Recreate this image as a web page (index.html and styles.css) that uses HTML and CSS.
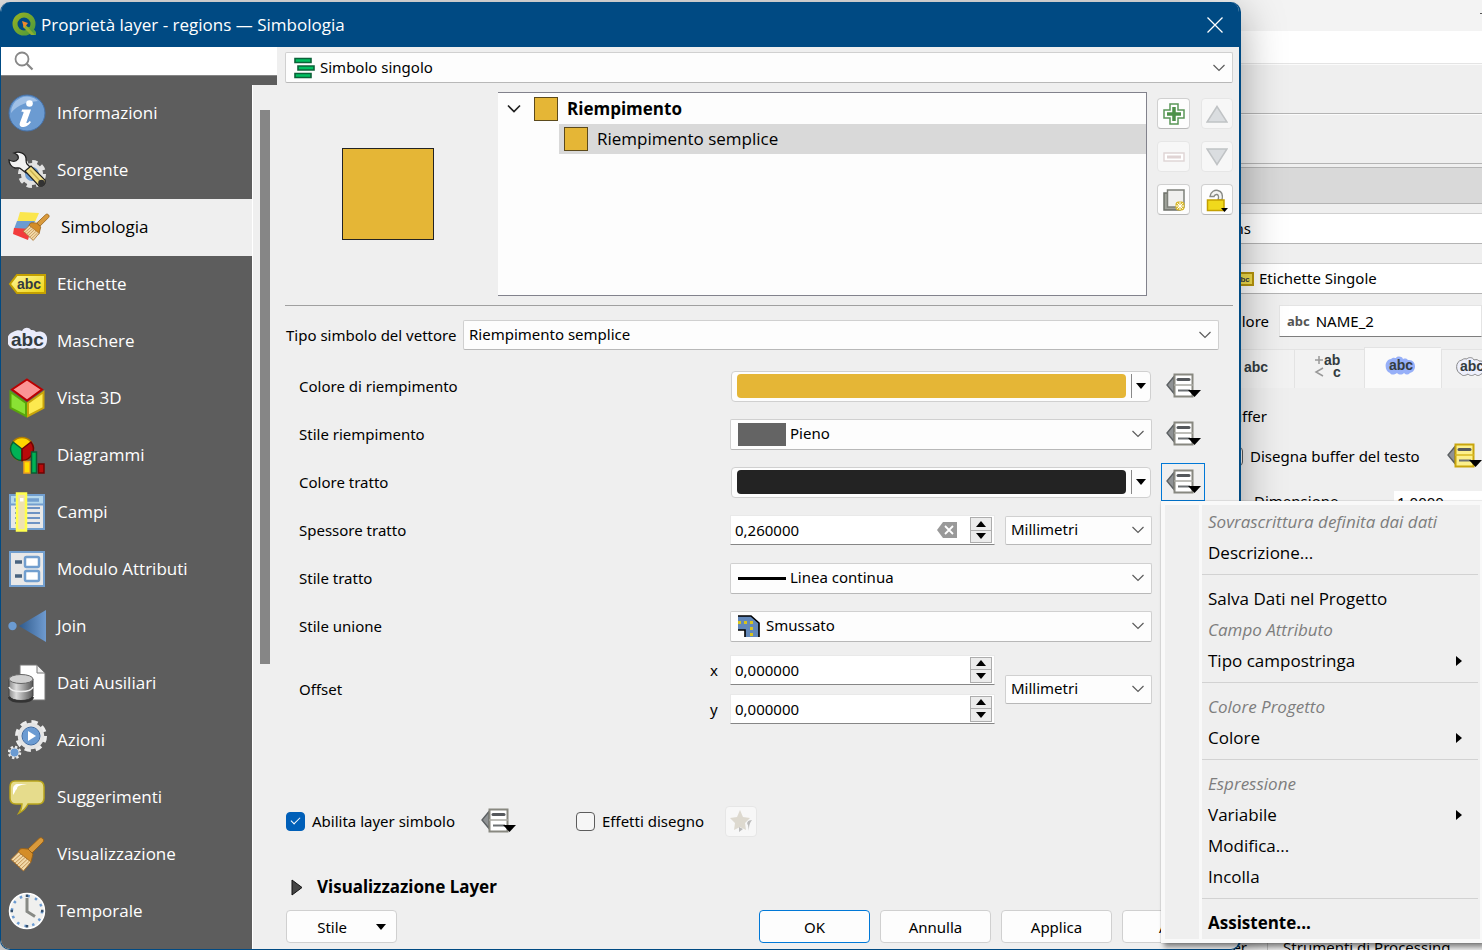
FILE: index.html
```html
<!DOCTYPE html>
<html lang="it">
<head>
<meta charset="UTF-8">
<meta name="viewport" content="width=device-width, initial-scale=1.0">
<title>Proprietà layer - regions — Simbologia</title>
<link rel="stylesheet" href="styles.css">
</head>
<body>

<!-- shared icons -->
<svg class="defs" aria-hidden="true">
    <defs>
        <linearGradient id="gJoin"><stop offset="0" stop-color="#2f5a8c"/><stop offset="1" stop-color="#6f9bd0"/></linearGradient>
        <linearGradient id="gLabel" x1="0" y1="0" x2="1" y2="1"><stop offset="0" stop-color="#fdf6a0"/><stop offset="1" stop-color="#efd50e"/></linearGradient>
        <linearGradient id="gDb"><stop offset="0" stop-color="#8a8a8a"/><stop offset="0.3" stop-color="#dcdcdc"/><stop offset="1" stop-color="#555"/></linearGradient>
        <linearGradient id="gQ" x1="0" y1="0" x2="1" y2="1"><stop offset="0" stop-color="#93b023"/><stop offset="1" stop-color="#4f9a3a"/></linearGradient>
    </defs>
    <symbol id="chevron" viewBox="0 0 14 10"><path d="M1.500 2 7 7.500 12.500 2" fill="none" stroke="#5c5c5c" stroke-width="1.200"/></symbol>
    <symbol id="down" viewBox="0 0 10 6"><path d="M0 0h10L5 6z"/></symbol>
    <symbol id="up" viewBox="0 0 10 6"><path d="M0 6h10L5 0z"/></symbol>
    <symbol id="override" viewBox="0 0 35 26">
        <path d="M8 3.500v17L1 12z" fill="#8f9294" stroke="#5b5f62" stroke-width="1.400"/>
        <path d="M8.500 1.500h18v22h-18z" fill="#fff" stroke="#888880" stroke-width="2"/>
        <path d="M8 12h19" stroke="#a8a8a2" stroke-width="1.500"/>
        <path d="M12 6.500h11" stroke="#55585c" stroke-width="3" stroke-linecap="round"/>
        <path d="M12 17.500h12" stroke="#6c7073" stroke-width="2"/>
        <path d="M22 17h13l-6.500 7z"/>
    </symbol>
    <symbol id="overrideOn" viewBox="0 0 35 26">
        <path d="M8 3.500v17L1 12z" fill="#8f9294" stroke="#5b5f62" stroke-width="1.400"/>
        <path d="M8.500 1.500h18v22h-18z" fill="#fcf08c" stroke="#c9a50c" stroke-width="2"/>
        <path d="M8 12h19" stroke="#d8b920" stroke-width="1.500"/>
        <path d="M12 6.500h11" stroke="#55585c" stroke-width="3" stroke-linecap="round"/>
        <path d="M12 17.500h12" stroke="#6c7073" stroke-width="2"/>
        <path d="M22 17h13l-6.500 7z"/>
    </symbol>
    <symbol id="brush" viewBox="0 0 38 38">
        <path d="M34 3c2 1 2 3 1 4L24 18l-4-4L31 3.500c1-1 2-1 3-.5z" fill="#d99a3c" stroke="#97621a"/>
        <path d="M12 14c3-1 5 0 8 0l5 5c-1 3-1 5-2 8l-2 2L10 17z" fill="#d48d28" stroke="#97621a"/>
        <path d="M10.500 17 3 24.500 15.500 36l7.500-9z" fill="#f2d9a8" stroke="#a8702a"/>
        <path d="m5 26 8-7M7 28l8-7M9 30l8-7.500M11 32l8-7.500M13 34l8-7.500" stroke="#c29355"/>
    </symbol>
</svg>

<!-- layer styling panel behind the dialog -->
<section class="panel-window">
    <div class="panel-title"><i class="minimize"></i></div>
    <div class="panel-menubar"></div>
    <div class="panel-toolbar"></div>
    <div class="panel-toolbar"></div>
    <div class="panel-header"></div>
    <div class="panel-combo layer"><select aria-label="Layer"><option>regions</option></select></div>
    <div class="panel-combo mode">
        <svg width="24" height="14" viewBox="0 0 24 14"><path d="M6 1h17v12H6L1 7z" fill="#f4df4e" stroke="#b8960e" stroke-width="2"/><text x="6" y="10" class="tiny">abc</text></svg>
        <select aria-label="Tipo etichette"><option>Etichette Singole</option></select>
    </div>
    <div class="panel-value">
        <label for="valore">Valore</label>
        <div class="value-box"><b>abc</b><input id="valore" type="text" value="NAME_2"></div>
    </div>
    <div class="panel-tabs">
        <button type="button" class="first" aria-label="Formattazione"><b>abc</b></button>
        <button type="button" aria-label="Testo">
            <svg width="28" height="26" viewBox="0 0 28 26"><path d="M1 6h8M5 2v8M9 14l-7 4 7 4" fill="none" stroke="#999" stroke-width="1.500"/><text x="10" y="11" class="glyph">ab</text><text x="19" y="23" class="glyph">c</text></svg>
        </button>
        <button type="button" class="selected" aria-label="Buffer">
            <svg width="32" height="20" viewBox="0 0 32 20"><path d="M6 3c2-2 4-1 5-1 1-2 6-2 7 1 3-1 4 0 5 1 9-1 9 12 2 13-2 2-4 2-6 0-2 2-5 2-7 0-3 2-6 2-7 0C-1 15-1 4 6 3z" fill="#96aff8"/><text x="4" y="14" class="glyph">abc</text></svg>
        </button>
        <button type="button" class="last" aria-label="Maschera">
            <svg width="32" height="20" viewBox="0 0 32 20"><path d="M6 3c2-2 4-1 5-1 1-2 6-2 7 1 3-1 4 0 5 1 9-1 9 12 2 13-2 2-4 2-6 0-2 2-5 2-7 0-3 2-6 2-7 0C-1 15-1 4 6 3z" fill="#eef0fc" stroke="#888"/><text x="4" y="14" class="glyph">abc</text></svg>
        </button>
    </div>
    <div class="panel-group">Buffer</div>
    <div class="panel-check">
        <input type="checkbox" id="buffer"><label for="buffer">Disegna buffer del testo</label>
        <svg width="35" height="26"><use href="#overrideOn"/></svg>
    </div>
    <div class="panel-size"><label for="dimensione">Dimensione</label><input id="dimensione" type="text" value="1,0000"></div>
    <div class="panel-docks"><span>Ricer</span><span class="dock">Strumenti di Processing</span></div>
</section>

<main class="dialog">
    <header class="titlebar">
        <svg width="25" height="25" viewBox="0 0 25 25">
            <path d="M15 15h5l4 5v3h-4z" fill="#5aa03c"/>
            <circle cx="12" cy="12" r="9" fill="none" stroke="url(#gQ)" stroke-width="5"/>
            <path d="m12 11 11 12h-4L11 15z" fill="#8cae30"/>
            <path d="m10 9 6 2-4 5z" fill="#f08a2c"/>
        </svg>
        <h1>Proprietà layer - regions — Simbologia</h1>
        <button type="button" class="close" aria-label="Chiudi"><svg width="16" height="16" viewBox="0 0 16 16"><path d="m.5.5 15 15m0-15-15 15" stroke="#fff" stroke-width="1.300"/></svg></button>
    </header>

    <div class="content">
        <aside class="sidebar">
            <div class="search">
                <svg width="20" height="20" viewBox="0 0 20 20"><circle cx="8" cy="8" r="6.500" fill="none" stroke="#878787" stroke-width="1.800"/><path d="m12.500 12.500 6 6" stroke="#878787" stroke-width="2.200"/></svg>
                <input type="search" aria-label="Cerca">
            </div>
            <div class="list">
                <nav class="pages">
                    <a href="#informazioni">
                        <svg width="38" height="38" viewBox="0 0 38 38"><circle cx="19" cy="19" r="18" fill="#6b9bd2" stroke="#4571a8"/><path d="M3 19A16 16 0 0 1 30 7C20 8 10 10 3 19z" fill="#a0c0e6"/><circle cx="21.500" cy="9.500" r="3.300" fill="#fff"/><path d="M14 15.500h9l-4.500 12.500c-.5 1.600 1.500 1.500 3-1l1.500 1c-2.500 4-6 5-8 5-3 0-4-2-3-4.500L15.500 19c.5-1.500-1-1.500-2-1z" fill="#fff"/></svg>
                        Informazioni</a>
                    <a href="#sorgente">
                        <svg width="38" height="38" viewBox="0 0 38 38"><circle cx="24" cy="23" r="11.500" fill="none" stroke="#e2e2e2" stroke-width="5" stroke-dasharray="5 4"/><circle cx="24" cy="23" r="9" fill="#6b9bd2" stroke="#e2e2e2" stroke-width="4"/><path d="M1 9c4 2 7 2 9-1 1-3-1-5-4-6 5-2 11 0 12 5 0 3 0 5 1 6l4 4-5 5-5-4c-2-2-3-1-6-1-4-1-6-5-6-8z" fill="#f2f2f2" stroke="#222" stroke-width="1.300"/><path d="m17 20 6-5 14 14c1 4-2 7-6 6z" fill="#f0dc82" stroke="#222" stroke-width="1.200"/><path d="m22 19 11 12" stroke="#c9b250" stroke-width="1.500"/><circle cx="33.500" cy="32" r="3.300" fill="#333"/></svg>
                        Sorgente</a>
                    <a href="#simbologia" class="current">
                        <svg width="42" height="38" viewBox="0 0 42 38"><path d="m10 4 19 1-4 9H7z" fill="#fbe64d"/><path d="M7 13h18l-4 8H4z" fill="#6b9bd2"/><path d="m4 20 17 1-3 11-15-6z" fill="#f23c3c"/><use href="#brush" x="11" y="2" width="30" height="34"/></svg>
                        Simbologia</a>
                    <a href="#etichette">
                        <svg width="38" height="38" viewBox="0 0 38 38"><path d="M9 10h28v18H9l-7-9z" fill="url(#gLabel)" stroke="#c4a000" stroke-width="2"/><text x="9" y="24" class="abc">abc</text></svg>
                        Etichette</a>
                    <a href="#maschere">
                        <svg width="42" height="38" viewBox="1 -1 42 38"><path d="M6 9c3-2 7-2 9-1 2-4 7-4 9-1 4 0 4 1 5 2 5-2 12 1 11 8 0 9-8 10-12 8-3 1-6 1-8 0-3 1-5 1-7 0-3 1-6 1-8 0C-2 22-1 11 6 9z" fill="#eaecfb"/><text x="4" y="23" class="abc big">abc</text></svg>
                        Maschere</a>
                    <a href="#vista3d">
                        <svg width="38" height="40" viewBox="0 0 38 40"><path d="m19 1.500 15 10-15 11-15-11z" fill="#fc9494" stroke="#b00" stroke-width="2"/><path d="M2.500 14 18 25v13L2.500 30z" fill="#8ae234" stroke="#5aa60a" stroke-width="2"/><path d="M35.500 14 20 25v13l15.500-8z" fill="#fce94f" stroke="#c9a50a" stroke-width="2"/></svg>
                        Vista 3D</a>
                    <a href="#diagrammi">
                        <svg width="38" height="38" viewBox="0 0 38 38"><circle cx="14" cy="13" r="11.500" fill="#ffd500" stroke="#b07c00" stroke-width="1.500"/><path d="M14 13v11.500A11.500 11.500 0 0 1 5 6z" fill="#00b355" stroke="#0a5c34" stroke-width="1.500"/><path d="M14 13v11.500A11.500 11.500 0 0 0 23 6z" fill="#b80a0a" stroke="#6e0404" stroke-width="1.500"/><path d="M16 25.500h6V37h-6z" fill="#fd0" stroke="#f0a020" stroke-width="1.500"/><path d="M23.500 16h5v21h-5z" fill="#00b355" stroke="#0a5c34" stroke-width="1.500"/><path d="M30.500 28h5.500v9h-5.500z" fill="#b80a0a" stroke="#6e0404" stroke-width="1.500"/></svg>
                        Diagrammi</a>
                    <a href="#campi">
                        <svg width="38" height="40" viewBox="0 0 38 40"><path d="M2 3h34v34H2z" fill="#e8e8e8" stroke="#729fcf" stroke-width="2"/><path d="M3 4h32v8H3z" fill="#b5d8ec"/><path d="M3 12.500h32" stroke="#729fcf" stroke-width="2"/><path d="M6 8h25" stroke="#729fcf" stroke-width="3.500"/><path d="M7 16h25M7 21h25M7 26h25M7 31h25" stroke="#6d93c4" stroke-width="2"/><path d="M9 1.500h9v37H9z" fill="#efe2b0" stroke="#ffff4d" stroke-width="2.500"/><path d="M12 6h3.500v3.500H12z" fill="#fff"/></svg>
                        Campi</a>
                    <a href="#modulo">
                        <svg width="38" height="38" viewBox="0 0 38 38"><path d="M2 2h34v34H2z" fill="#e8e8e8" stroke="#729fcf" stroke-width="2"/><rect x="17" y="7" width="14" height="10" rx="1.500" fill="#fff" stroke="#729fcf" stroke-width="2.500"/><rect x="17" y="21" width="14" height="10" rx="1.500" fill="#fff" stroke="#729fcf" stroke-width="2.500"/><path d="M7 12h7M7 26h7" stroke="#4a6480" stroke-width="3.500"/></svg>
                        Modulo Attributi</a>
                    <a href="#join">
                        <svg width="38" height="38" viewBox="0 0 38 38"><circle cx="4.500" cy="19" r="4.200" fill="#6b9bd2"/><path d="M11 19 38 3v32z" fill="url(#gJoin)"/></svg>
                        Join</a>
                    <a href="#ausiliari">
                        <svg width="40" height="40" viewBox="0 0 40 40"><path d="M12 2h17l8 8v27H12z" fill="#fff" stroke="#777"/><path d="M29 2v8h8z" fill="#eee" stroke="#777"/><path d="M1 16v17c2 6 22 6 24 0V16z" fill="url(#gDb)" stroke="#444"/><ellipse cx="13" cy="16" rx="12" ry="4.500" fill="#d0d0d0" stroke="#666"/><path d="M1 24c2 6 22 6 24 0" fill="none" stroke="#eee" stroke-width="1.500"/><path d="M1 34c2 6 22 6 24 0" fill="none" stroke="#333" stroke-width="2.500"/></svg>
                        Dati Ausiliari</a>
                    <a href="#azioni">
                        <svg width="40" height="42" viewBox="0 0 40 42"><circle cx="23" cy="17" r="14" fill="none" stroke="#ececec" stroke-width="4" stroke-dasharray="6.200 4.800"/><circle cx="23" cy="17" r="11" fill="#6b9bd2" stroke="#e4e4e4" stroke-width="4.500"/><circle cx="23" cy="17" r="9" fill="none" stroke="#3d6aa3"/><path d="m20 12 8 5-8 5z" fill="#fff"/><circle cx="6.500" cy="33.500" r="5.500" fill="none" stroke="#ececec" stroke-width="2.500" stroke-dasharray="2.300 2"/><circle cx="6.500" cy="33.500" r="4.500" fill="#6b9bd2" stroke="#e4e4e4"/></svg>
                        Azioni</a>
                    <a href="#suggerimenti">
                        <svg width="38" height="38" viewBox="0 0 38 38"><path d="M7 3h23c4 0 6 2 6 6v11c0 4-2 6-6 6H20c-2 4-5 7-9 9 2-3 3-6 3-9H8c-4 0-6-2-6-6V9c0-4 2-6 5-6z" fill="#e6dc8c" stroke="#b9a51c" stroke-width="1.500"/><path d="M5 17V11c0-3 2-5 5-5h9c-7 1-10 2-10 5-2 1-2 4-4 6z" fill="#fff"/></svg>
                        Suggerimenti</a>
                    <a href="#visualizzazione">
                        <svg width="38" height="38"><use href="#brush"/></svg>
                        Visualizzazione</a>
                    <a href="#temporale">
                        <svg width="38" height="38" viewBox="0 0 38 38"><circle cx="19" cy="19" r="17.500" fill="#f0f0ee" stroke="#fff" stroke-width="1.500"/><circle cx="19" cy="19" r="15" fill="none" stroke="#6b9bd2" stroke-width="2.500" stroke-dasharray="2.500 5.354"/><path d="M19 2.500V5M19 33v2.500M2.500 19H5M33 19h2.500" stroke="#34506e" stroke-width="2.500"/><path d="M19 6v13.500l8 5" fill="none" stroke="#888a85" stroke-width="3"/></svg>
                        Temporale</a>
                </nav>
                <div class="scrollbar"><div class="thumb"></div></div>
            </div>
        </aside>

        <form class="main">
            <div class="combo renderer">
                <svg width="21" height="22" viewBox="0 0 21 22"><path d="M1 1.500h16v4H1zM4 9h16v4H4zM1 16.500h16v4H1z" fill="#00c060" stroke="#0b6138" stroke-width="1.600"/></svg>
                <select aria-label="Tipo di simbolo"><option>Simbolo singolo</option></select>
                <svg class="chev"><use href="#chevron"/></svg>
            </div>

            <div class="symbol">
                <div class="preview"><i></i></div>
                <ul class="tree">
                    <li class="root"><svg width="14" height="10" viewBox="0 0 14 10"><path d="m1 1.500 6 6 6-6" fill="none" stroke="#222" stroke-width="1.700"/></svg><i></i>Riempimento</li>
                    <li class="leaf"><i></i>Riempimento semplice</li>
                </ul>
                <div class="tools">
                    <button type="button" aria-label="Aggiungi"><svg width="22" height="22" viewBox="0 0 22 22"><path d="M7 1h8v6h6v8h-6v6H7v-6H1V7h6z" fill="#fff" stroke="#5a9657" stroke-width="1.500"/><path d="M11 4v14M4 11h14" stroke="#4d9149" stroke-width="3.500"/></svg></button>
                    <button type="button" disabled aria-label="Sposta su"><svg width="22" height="18" viewBox="0 0 22 18"><path d="M11 1.500 21 17H1z" fill="#dadde0" stroke="#c0c3c5" stroke-width="1.500"/></svg></button>
                    <button type="button" disabled aria-label="Rimuovi"><svg width="22" height="10" viewBox="0 0 22 10"><path d="M1 1h20v8H1z" fill="#fff" stroke="#e0d6d6" stroke-width="1.500"/><path d="M4 5h14" stroke="#e0d4d4" stroke-width="3"/></svg></button>
                    <button type="button" disabled aria-label="Sposta giù"><svg width="22" height="18" viewBox="0 0 22 18"><path d="M11 16.500 21 1H1z" fill="#dadde0" stroke="#c0c3c5" stroke-width="1.500"/></svg></button>
                    <button type="button" aria-label="Duplica"><svg width="22" height="22" viewBox="0 0 22 22"><path d="M1 4h16v17H1z" fill="#a0a39b" stroke="#6d7069" stroke-width="1.500"/><path d="M4.500 1H21v17H4.500z" fill="#f0f0ee" stroke="#7d8079" stroke-width="1.500"/><rect x="12.500" y="12.500" width="9" height="9" rx="3" fill="#d9b92c"/><path d="M17 13v8M13 17h8M14.200 14.200l5.600 5.600m0-5.600-5.600 5.600" stroke="#fff"/></svg></button>
                    <button type="button" aria-label="Blocca"><svg width="24" height="24" viewBox="0 0 24 24"><path d="M5 8.500C5.500 3.500 10 1.500 13 2.500c4 1 5 5 4 9.500h-4c1-3 .5-5-1-5.500-1.500-.3-2.500.5-3 2z" fill="#f4f4f2" stroke="#888a85" stroke-width="1.400"/><path d="M2.500 12H19v10.500H2.500z" fill="#f0d91c" stroke="#c4a000" stroke-width="1.500"/><path d="M16 20h7l-3.500 4z"/></svg></button>
                </div>
            </div>

            <div class="symbol-type">
                <label for="tipo">Tipo simbolo del vettore</label>
                <div class="combo">
                    <select id="tipo"><option>Riempimento semplice</option></select>
                    <svg class="chev"><use href="#chevron"/></svg>
                </div>
            </div>

            <div class="props">
                <div class="prop">
                    <label for="colore">Colore di riempimento</label>
                    <button type="button" id="colore" class="color"><i class="fill"></i><svg width="10" height="6"><use href="#down"/></svg></button>
                    <button type="button" class="override" aria-label="Sovrascrittura riempimento"><svg width="35" height="26"><use href="#override"/></svg></button>
                </div>
                <div class="prop">
                    <label for="stileRiempimento">Stile riempimento</label>
                    <div class="combo">
                        <i class="solid"></i>
                        <select id="stileRiempimento"><option>Pieno</option></select>
                        <svg class="chev"><use href="#chevron"/></svg>
                    </div>
                    <button type="button" class="override" aria-label="Sovrascrittura stile"><svg width="35" height="26"><use href="#override"/></svg></button>
                </div>
                <div class="prop">
                    <label for="coloreTratto">Colore tratto</label>
                    <button type="button" id="coloreTratto" class="color"><i class="stroke"></i><svg width="10" height="6"><use href="#down"/></svg></button>
                    <button type="button" class="override active" aria-label="Sovrascrittura tratto"><svg width="35" height="26"><use href="#override"/></svg></button>
                </div>
                <div class="prop">
                    <label for="spessore">Spessore tratto</label>
                    <div class="pair">
                        <div class="spin">
                            <input id="spessore" type="text" value="0,260000">
                            <svg class="clear" width="20" height="16" viewBox="0 0 20 16"><path d="M6 0h14v16H6L0 8z" fill="#999"/><path d="m8 4 8 8m0-8-8 8" stroke="#fff" stroke-width="1.800"/></svg>
                            <span class="steps"><button type="button" aria-label="Aumenta"><svg width="10" height="6"><use href="#up"/></svg></button><button type="button" aria-label="Diminuisci"><svg width="10" height="6"><use href="#down"/></svg></button></span>
                        </div>
                        <div class="combo unit"><select aria-label="Unità spessore"><option>Millimetri</option></select><svg class="chev"><use href="#chevron"/></svg></div>
                    </div>
                </div>
                <div class="prop">
                    <label for="stileTratto">Stile tratto</label>
                    <div class="combo">
                        <i class="line"></i>
                        <select id="stileTratto"><option>Linea continua</option></select>
                        <svg class="chev"><use href="#chevron"/></svg>
                    </div>
                </div>
                <div class="prop">
                    <label for="unione">Stile unione</label>
                    <div class="combo join">
                        <svg width="22" height="22" viewBox="0 0 22 22"><path d="M0 1h13l8 7v14H7v-7H0z" fill="#6288ba"/><path d="M0 1h13l8 7v14M0 15h7v7" fill="none" stroke="#000" stroke-width="1.600"/><path d="M0 6h3v3H0zM6 6h3v3H6zM12 6h3v3h-3zM12 12h3v3h-3zM12 18h3v3h-3z" fill="#d8c41e"/></svg>
                        <select id="unione"><option>Smussato</option></select>
                        <svg class="chev"><use href="#chevron"/></svg>
                    </div>
                </div>
                <div class="prop offset">
                    <span>Offset</span>
                    <div class="pair">
                        <div class="xy">
                            <div class="axis">
                                <label for="ox">x</label>
                                <div class="spin"><input id="ox" type="text" value="0,000000"><span class="steps"><button type="button" aria-label="Aumenta x"><svg width="10" height="6"><use href="#up"/></svg></button><button type="button" aria-label="Diminuisci x"><svg width="10" height="6"><use href="#down"/></svg></button></span></div>
                            </div>
                            <div class="axis">
                                <label for="oy">y</label>
                                <div class="spin"><input id="oy" type="text" value="0,000000"><span class="steps"><button type="button" aria-label="Aumenta y"><svg width="10" height="6"><use href="#up"/></svg></button><button type="button" aria-label="Diminuisci y"><svg width="10" height="6"><use href="#down"/></svg></button></span></div>
                            </div>
                        </div>
                        <div class="combo unit"><select aria-label="Unità offset"><option>Millimetri</option></select><svg class="chev"><use href="#chevron"/></svg></div>
                    </div>
                </div>
            </div>

            <div class="options">
                <input type="checkbox" id="abilita" checked><label for="abilita">Abilita layer simbolo</label>
                <button type="button" class="override" aria-label="Sovrascrittura layer"><svg width="35" height="26"><use href="#override"/></svg></button>
                <input type="checkbox" id="effetti" class="effects"><label for="effetti">Effetti disegno</label>
                <button type="button" class="star" disabled aria-label="Personalizza effetti"><svg width="24" height="24" viewBox="0 0 24 24"><path d="m11 1 3 7 7 1-5 5 1 7-6-3-6 3 1-7-5-5 7-1z" fill="#ddd9cf"/><path d="M23 11c-4 0-6 3-4 5l1 6c0-4 0-7 3-11zM10 18l4 2-4 3z" fill="#bbb"/></svg></button>
            </div>

            <details class="rendering">
                <summary><svg width="12" height="17" viewBox="0 0 12 17"><path d="M1 1v15l10-7.500z" fill="#444" stroke="#111"/></svg>Visualizzazione Layer</summary>
            </details>

            <footer class="buttons">
                <button type="button" class="style">Stile<svg width="10" height="6"><use href="#down"/></svg></button>
                <button type="submit" class="default">OK</button>
                <button type="button">Annulla</button>
                <button type="button">Applica</button>
                <button type="button">Aiuto</button>
            </footer>
        </form>
    </div>
</main>

<!-- data defined override menu -->
<div class="menu" role="menu">
    <button type="button" role="menuitem" disabled>Sovrascrittura definita dai dati</button>
    <button type="button" role="menuitem">Descrizione...</button>
    <hr>
    <button type="button" role="menuitem">Salva Dati nel Progetto</button>
    <button type="button" role="menuitem" disabled>Campo Attributo</button>
    <button type="button" role="menuitem">Tipo campostringa<svg width="6" height="10" viewBox="0 0 6 10"><path d="M0 0v10l6-5z"/></svg></button>
    <hr>
    <button type="button" role="menuitem" disabled>Colore Progetto</button>
    <button type="button" role="menuitem">Colore<svg width="6" height="10" viewBox="0 0 6 10"><path d="M0 0v10l6-5z"/></svg></button>
    <hr>
    <button type="button" role="menuitem" disabled>Espressione</button>
    <button type="button" role="menuitem">Variabile<svg width="6" height="10" viewBox="0 0 6 10"><path d="M0 0v10l6-5z"/></svg></button>
    <button type="button" role="menuitem">Modifica...</button>
    <button type="button" role="menuitem">Incolla</button>
    <hr>
    <button type="button" role="menuitem" class="strong">Assistente...</button>
</div>

</body>
</html>
```
FILE: styles.css
```css
* {
    box-sizing: border-box;
}
body {
    margin: 0;
    height: 100vh;
    overflow: hidden;
    position: relative;
    background: #e3e3e3;
    color: #000;
    font-family: "Noto Sans", "Open Sans", sans-serif;
    font-size: 15px;
    line-height: 20px;
}
button, input, select {
    font: inherit;
    color: inherit;
    margin: 0;
}
button {
    padding: 0;
}
select {
    appearance: none;
    border: 0;
    padding: 0 0 2px;
    background: transparent;
    flex: 1;
    min-width: 0;
    height: 100%;
    outline: 0;
}
svg {
    display: block;
    flex: none;
}
.defs {
    position: absolute;
    width: 0;
    height: 0;
}
.abc, .glyph, .tiny {
    font-family: "Liberation Sans", Arial, sans-serif;
    font-weight: bold;
    font-size: 14px;
    fill: #333b40;
}
.abc.big {
    font-size: 19px;
}
.tiny {
    font-size: 8px;
}
input[type="checkbox"] {
    appearance: none;
    width: 19px;
    height: 19px;
    border: 1px solid #5c5c5c;
    border-radius: 4px;
    background: #f6f6f6;
    flex: none;
}
input[type="checkbox"]:checked {
    background: #005fb8;
    border-color: #005fb8;
    display: grid;
    place-items: center;
}
input[type="checkbox"]:checked::after {
    content: "";
    width: 8px;
    height: 4px;
    margin-bottom: 3px;
    border-left: 1px solid #fff;
    border-bottom: 1px solid #fff;
    transform: rotate(-45deg);
}

/* window behind */
.panel-window {
    position: absolute;
    top: 0;
    right: 0;
    bottom: 0;
    width: 302px;
    background: #efefef;
    overflow: hidden;
    display: flex;
    flex-direction: column;
}
.panel-window > div {
    flex: none;
}
.panel-title {
    height: 31px;
    background: #f3f3f3;
    display: flex;
    justify-content: flex-end;
    align-items: center;
}
.minimize {
    width: 2px;
    height: 1px;
    margin-bottom: 4px;
    background: #555;
}
.panel-menubar {
    height: 33px;
    background: #fff;
    border-bottom: 1px solid #e4e4e4;
}
.panel-toolbar {
    height: 50px;
    border-top: 1px solid #fbfbfb;
    border-bottom: 1px solid #b4b4b4;
}
.panel-header {
    height: 37px;
    margin-top: 3px;
    background: #d9d9d9;
    border-top: 1px solid #b4b4b4;
    border-bottom: 1px solid #b4b4b4;
}
.panel-combo {
    height: 31px;
    background: #fff;
    border-top: 1px solid #d0d0d0;
    border-bottom: 1px solid #b4b4b4;
    display: flex;
    align-items: center;
}
.layer {
    margin-top: 9px;
    padding-left: 18px;
}
.mode {
    margin-top: 19px;
    padding-left: 50px;
    gap: 5px;
}
.panel-value {
    display: flex;
    align-items: center;
    gap: 10px;
    padding-left: 44px;
    height: 32px;
    margin-top: 11px;
}
.panel-value label {
    width: 45px;
    direction: rtl;
}
.value-box {
    flex: 1;
    height: 32px;
    display: flex;
    align-items: center;
    gap: 6px;
    padding-left: 7px;
    background: #fff;
    border: 1px solid #e4e4e4;
    border-bottom-color: #7e7e7e;
}
.value-box b {
    font-size: 13px;
    color: #555;
}
.value-box input {
    width: 100px;
    border: 0;
    padding: 0;
}
.panel-tabs {
    display: flex;
    align-items: flex-end;
    height: 41px;
    margin-top: 10px;
}
.panel-tabs button {
    width: 70px;
    height: 39px;
    padding: 0 4px 4px 0;
    border: 1px solid #e3e3e3;
    border-bottom: 0;
    border-right: 0;
    background: #f2f2f2;
    display: flex;
    align-items: center;
    justify-content: center;
    flex: none;
}
.panel-tabs .first {
    width: 114px;
    justify-content: flex-end;
    padding-right: 26px;
    font-family: "Liberation Sans", Arial, sans-serif;
    font-size: 14px;
    color: #333b40;
}
.panel-tabs .selected {
    width: 77px;
    height: 41px;
    background: #fafafa;
}
.panel-tabs .last {
    width: 80px;
    justify-content: flex-start;
    padding-left: 14px;
}
.panel-group {
    margin-top: 18px;
    padding-left: 43px;
}
.panel-check {
    display: flex;
    align-items: center;
    height: 26px;
    margin-top: 17px;
    padding-left: 44px;
}
.panel-check label {
    margin-left: 7px;
    flex: 1;
}
.panel-size {
    display: flex;
    justify-content: space-between;
    align-items: flex-start;
    margin-top: 22px;
    padding-left: 74px;
}
.panel-size input {
    width: 88px;
    height: 30px;
    border: 0;
    padding: 0 3px 8px;
    background: #fff;
}
.panel-docks {
    display: flex;
    align-items: flex-start;
    margin-top: auto;
    height: 13px;
    padding-left: 32px;
    gap: 20px;
}
.dock {
    flex: 1;
    padding-left: 15px;
    border-left: 1px solid #c4c4c4;
    white-space: nowrap;
}

/* dialog */
.dialog {
    position: absolute;
    top: 2px;
    left: 0;
    right: 241px;
    bottom: 0;
    display: flex;
    flex-direction: column;
    background: #efefef;
    border: 1px solid #004a83;
    border-top: 0;
    border-right-width: 2px;
    border-radius: 10px;
    overflow: hidden;
    box-shadow: 0 10px 44px rgba(0, 0, 0, 0.35);
}
.titlebar {
    height: 45px;
    flex: none;
    display: flex;
    align-items: center;
    gap: 4px;
    padding: 0 16px 0 11px;
    background: #004a83;
    color: #fff;
}
.titlebar h1 {
    flex: 1;
    margin: 0;
    font-family: "Open Sans", "Noto Sans", sans-serif;
    font-size: 17px;
    font-weight: normal;
}
.close {
    border: 0;
    background: none;
}
.content {
    flex: 1;
    min-height: 0;
    display: flex;
}

/* page list */
.sidebar {
    width: 276px;
    flex: none;
    display: flex;
    flex-direction: column;
    background: #5d5d5d;
}
.search {
    height: 29px;
    display: flex;
    align-items: center;
    gap: 8px;
    padding-left: 13px;
    background: #fff;
    border-bottom: 1px solid #868686;
}
.search input {
    flex: 1;
    min-width: 0;
    border: 0;
    outline: 0;
    background: transparent;
}
.list {
    flex: 1;
    margin-top: 9px;
    display: flex;
}
.pages {
    flex: 1;
    font-family: "Open Sans", "Noto Sans", sans-serif;
    font-size: 17px;
}
.pages a {
    display: grid;
    grid-template-columns: 39px 1fr;
    align-items: center;
    height: 57px;
    padding: 0 0 2px 7px;
    gap: 10px;
    color: #fff;
    text-decoration: none;
}
.pages .current {
    grid-template-columns: 41px 1fr;
    background: #efefef;
    color: #000;
    padding-left: 9px;
}
.scrollbar {
    width: 25px;
    padding: 25px 7px 0;
    background: #efefef;
    border-left: 1px solid #fff;
}
.thumb {
    width: 10px;
    height: 554px;
    background: #868686;
}

/* symbology page */
.main {
    flex: 1;
    min-width: 0;
    display: flex;
    flex-direction: column;
    padding: 5px 6px 6px 8px;
}
.combo {
    flex: 1;
    min-width: 0;
    height: 31px;
    display: flex;
    align-items: center;
    padding: 0 6px 0 5px;
    background: #fdfdfd;
    border: 1px solid #d0d0d0;
    border-bottom-color: #b8b8b8;
    border-radius: 2px;
}
.chev {
    width: 14px;
    height: 10px;
    pointer-events: none;
}
.renderer {
    flex: none;
    padding-left: 8px;
    gap: 5px;
}
.symbol {
    display: flex;
    margin-top: 9px;
    padding-bottom: 9px;
    border-bottom: 1px solid #a0a0a0;
}
.preview {
    width: 205px;
    margin-right: 8px;
    display: flex;
    align-items: center;
    justify-content: center;
}
.preview i {
    width: 92px;
    height: 92px;
    background: #e5b636;
    border: 1px solid #232323;
}
.tree {
    flex: 1;
    height: 204px;
    margin: 0;
    padding: 1px 0;
    list-style: none;
    background: #fdfdfd;
    border: 1px solid #82828c;
    border-left: 0;
    font-family: "Open Sans", "Noto Sans", sans-serif;
    font-size: 17px;
}
.tree li {
    height: 30px;
    display: flex;
    align-items: center;
}
.tree i {
    width: 24px;
    height: 24px;
    margin-right: 9px;
    background: #e5b636;
    border: 1px solid #5c4a1c;
}
.tree .root {
    padding-left: 9px;
    font-weight: bold;
}
.tree .root i {
    margin-left: 13px;
}
.tree .leaf {
    margin-left: 61px;
    padding-left: 5px;
    background: #d9d9d9;
}
.tools {
    display: grid;
    grid-template-columns: 33px 32px;
    grid-auto-rows: 31px;
    gap: 12px 11px;
    padding-top: 6px;
    margin-left: 10px;
}
.tools button, .star {
    display: flex;
    align-items: center;
    justify-content: center;
    background: #fdfdfd;
    border: 1px solid #d0d0d0;
    border-bottom-color: #b8b8b8;
    border-radius: 4px;
}
.tools button:disabled, .star:disabled {
    background: #f7f7f7;
    border-color: #e6e6e6;
}
.symbol-type {
    display: flex;
    align-items: center;
    margin: 14px 14px 0 1px;
}
.symbol-type label {
    width: 177px;
    white-space: nowrap;
}
.symbol-type .combo {
    height: 30px;
}
.props {
    margin-top: 12px;
    padding-left: 14px;
}
.prop {
    display: grid;
    grid-template-columns: 1fr 422px 47px;
    column-gap: 9px;
    align-items: center;
    height: 48px;
    padding-right: 25px;
}
.color {
    height: 31px;
    margin: 0 1px;
    display: flex;
    align-items: center;
    gap: 5px;
    padding: 0 4px 0 5px;
    background: #fdfdfd;
    border: 1px solid #d0d0d0;
    border-radius: 4px;
}
.color i {
    flex: 1;
    height: 24px;
    border-radius: 4px;
}
.color .fill {
    background: #e5b636;
}
.color .stroke {
    background: #232323;
}
.color svg {
    box-sizing: content-box;
    padding: 9px 0 9px 4px;
    border-left: 1px solid #888;
}
.override {
    width: 44px;
    height: 38px;
    border: 1px solid transparent;
    background: none;
    display: flex;
    align-items: center;
    justify-content: center;
}
.override.active {
    border-color: #0078d7;
}
.solid {
    width: 48px;
    height: 23px;
    margin: 0 4px 0 2px;
    background: #646464;
}
.line {
    width: 48px;
    height: 3px;
    margin: 0 4px 0 2px;
    background: #000;
}
.join svg:first-child {
    margin: 0 6px 0 2px;
}
.pair {
    display: flex;
    align-items: center;
    gap: 10px;
}
.unit {
    flex: 0 0 147px;
    height: 29px;
}
.spin {
    flex: 1;
    min-width: 0;
    height: 30px;
    display: flex;
    align-items: center;
    padding: 0 2px 0 4px;
    background: #fff;
    border: 1px solid #e9e9e9;
    border-bottom-color: #868686;
}
.spin input {
    flex: 1;
    min-width: 0;
    border: 0;
    padding: 0;
    outline: 0;
    background: transparent;
}
.clear {
    margin-right: 13px;
}
.steps {
    width: 22px;
    height: 26px;
    display: flex;
    flex-direction: column;
    border: 1px solid #adadad;
}
.steps button {
    flex: 1;
    display: flex;
    align-items: center;
    justify-content: center;
    border: 0;
    background: #ececec;
}
.steps button + button {
    border-top: 1px solid #adadad;
}
.offset {
    height: 78px;
}
.xy {
    flex: 1;
    display: flex;
    flex-direction: column;
    gap: 9px;
    margin-left: -20px;
}
.axis {
    display: flex;
    align-items: center;
}
.axis label {
    width: 20px;
}
.options {
    display: flex;
    align-items: center;
    margin: 74px 0 0 1px;
}
.options label {
    margin-left: 7px;
}
.options .override {
    margin-left: 22px;
}
.options .effects {
    margin-left: 55px;
}
.star {
    width: 32px;
    height: 31px;
    margin-left: 21px;
}
.rendering {
    margin-top: 37px;
    font-weight: bold;
    font-size: 17px;
}
.rendering summary {
    display: flex;
    align-items: center;
    gap: 14px;
    padding-left: 6px;
    list-style: none;
}
.buttons {
    display: flex;
    gap: 10px;
    margin-top: auto;
}
.buttons button {
    width: 111px;
    height: 33px;
    background: #fdfdfd;
    border: 1px solid #d0d0d0;
    border-radius: 4px;
}
.buttons .default {
    border-color: #0078d7;
}
.buttons .style {
    display: flex;
    align-items: center;
    justify-content: flex-end;
    gap: 29px;
    padding-right: 10px;
    margin: 0 auto 0 1px;
}

/* popup menu */
.menu {
    position: absolute;
    top: 501px;
    right: 0;
    width: 321px;
    display: flex;
    flex-direction: column;
    padding: 2px 0 0;
    background: linear-gradient(to right, #efefef 34px, #f9f9f9 34px, #f9f9f9 37px, #efefef 37px);
    border: 4px solid #f9f9f9;
    border-right-width: 2px;
    box-shadow: 0 0 1px rgba(0, 0, 0, 0.4), 3px 4px 5px rgba(0, 0, 0, 0.45);
    font-family: "Open Sans", "Noto Sans", sans-serif;
    font-size: 17px;
}
.menu button {
    height: 31px;
    display: flex;
    align-items: center;
    justify-content: space-between;
    padding: 0 18px 1px 43px;
    border: 0;
    background: none;
    text-align: left;
}
.menu button:disabled {
    color: #7d7d7d;
    font-style: italic;
}
.menu hr {
    width: 276px;
    height: 1px;
    margin: 5px 2px 9px auto;
    border: 0;
    background: #d2d2d2;
}
.menu .strong {
    font-weight: bold;
}
```
